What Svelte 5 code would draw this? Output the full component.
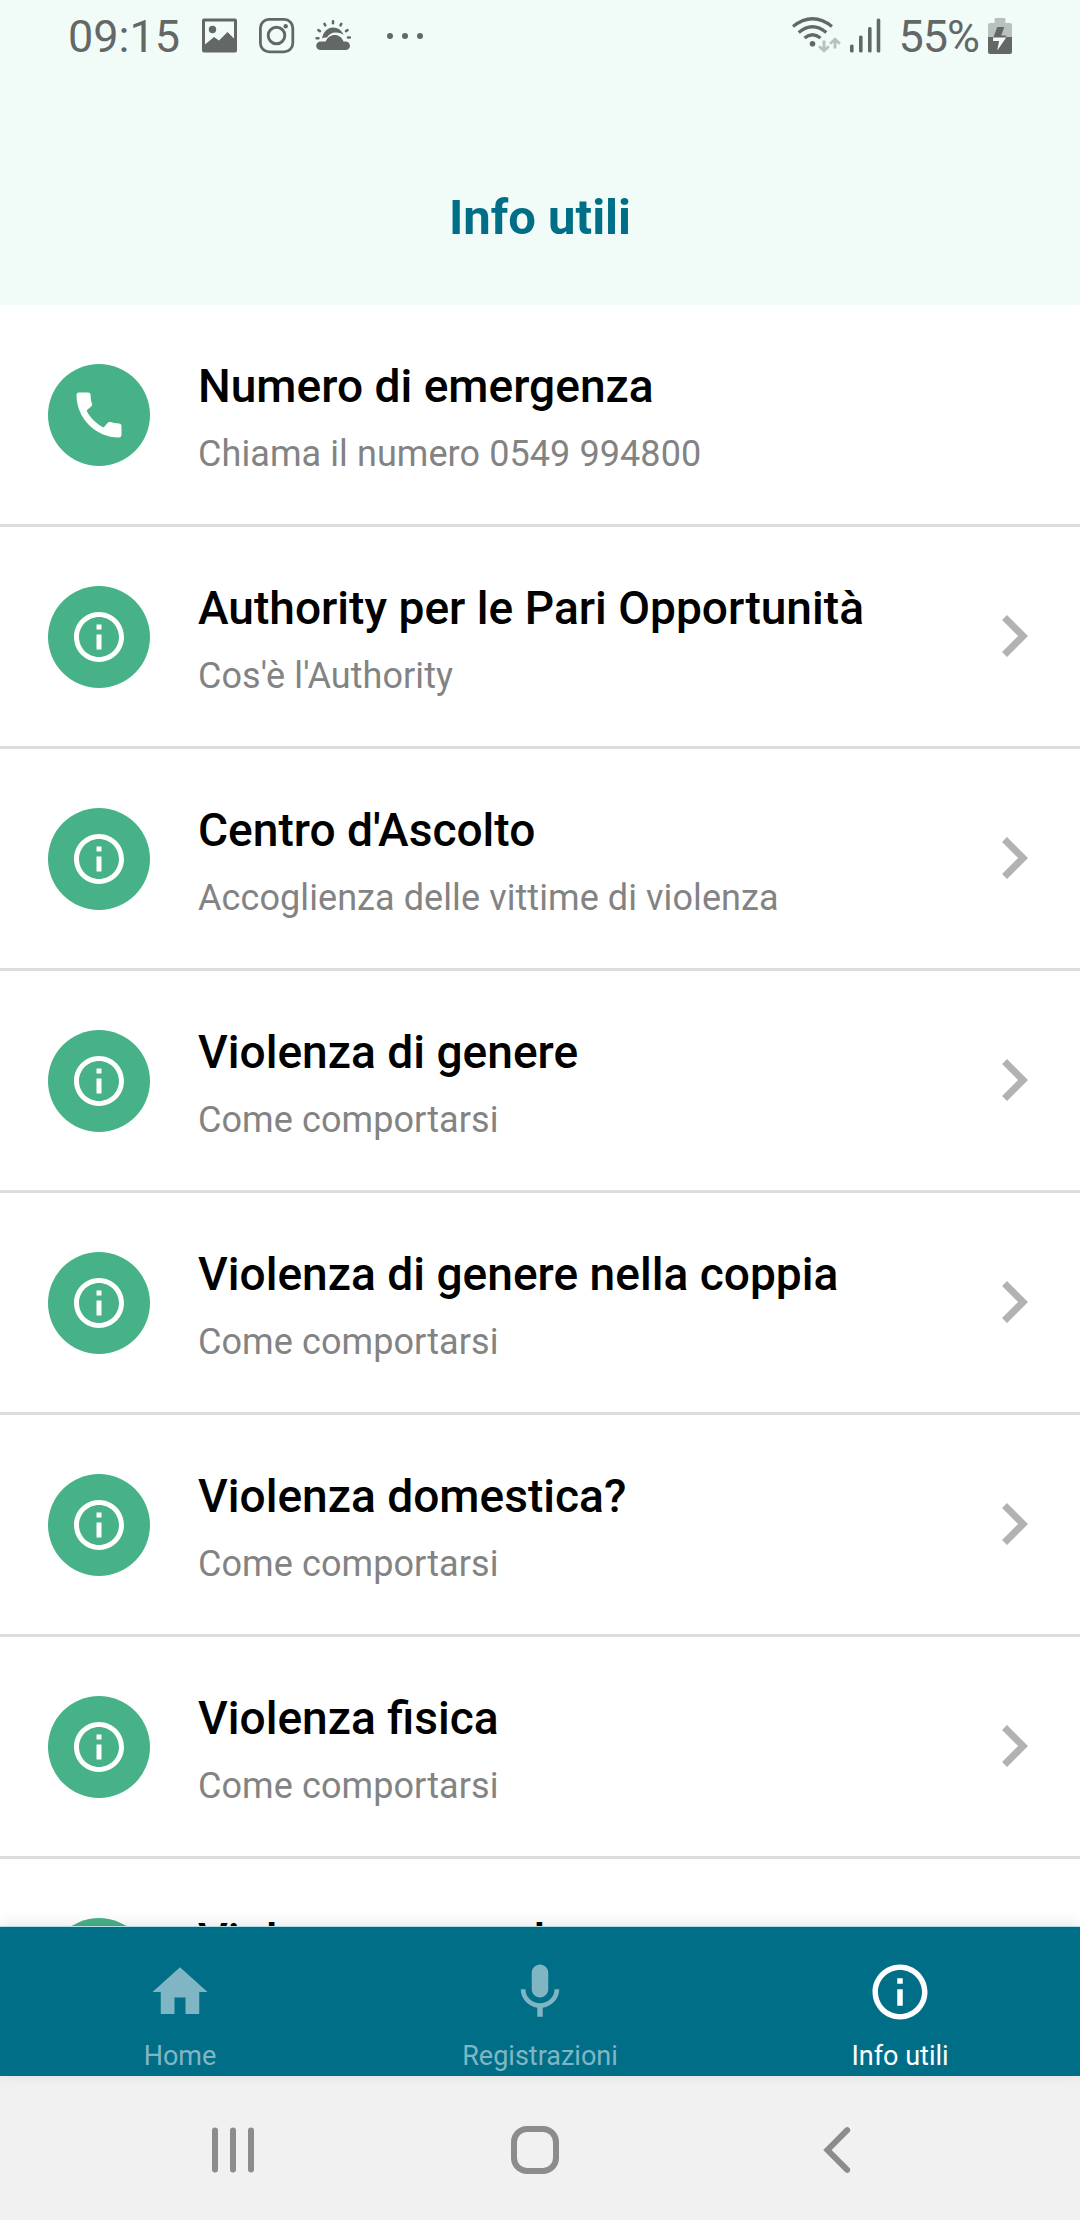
<script>
    const items = [
        { title: 'Numero di emergenza', subtitle: 'Chiama il numero 0549 994800', phone: true },
        { title: 'Authority per le Pari Opportunità', subtitle: "Cos'è l'Authority" },
        { title: "Centro d'Ascolto", subtitle: 'Accoglienza delle vittime di violenza' },
        { title: 'Violenza di genere', subtitle: 'Come comportarsi' },
        { title: 'Violenza di genere nella coppia', subtitle: 'Come comportarsi' },
        { title: 'Violenza domestica?', subtitle: 'Come comportarsi' },
        { title: 'Violenza fisica', subtitle: 'Come comportarsi' },
        { title: 'Violenza sessuale', subtitle: 'Come comportarsi' }
    ];

    const icons = {
        phone: 'M20.01 15.38c-1.23 0-2.42-.2-3.53-.56a.977.977 0 0 0-1.01.24l-1.57 1.97c-2.83-1.35-5.48-3.9-6.89-6.83l1.95-1.66c.27-.28.35-.67.24-1.02-.37-1.11-.56-2.3-.56-3.53 0-.54-.45-.99-.99-.99H4.19C3.65 3 3 3.24 3 3.99 3 13.28 10.73 21 20.01 21c.71 0 .99-.63.99-1.18v-3.45c0-.54-.45-.99-.99-.99z',
        info: 'M11 17h2v-6h-2v6zm1-15C6.48 2 2 6.48 2 12s4.48 10 10 10 10-4.48 10-10S17.52 2 12 2zm0 18c-4.41 0-8-3.59-8-8s3.59-8 8-8 8 3.59 8 8-3.59 8-8 8zM11 9h2V7h-2v2z',
        home: 'M10 20v-6h4v6h5v-8h3L12 3 2 12h3v8z',
        mic: 'M12 14c1.66 0 2.99-1.34 2.99-3L15 5c0-1.66-1.34-3-3-3S9 3.34 9 5v6c0 1.66 1.34 3 3 3zm5.3-3c0 3-2.54 5.1-5.3 5.1S6.7 14 6.7 11H5c0 3.41 2.72 6.23 6 6.72V21h2v-3.28c3.28-.48 6-3.3 6-6.72h-1.7z',
        chevron: 'M10 6L8.59 7.41 13.17 12l-4.58 4.59L10 18l6-6z'
    };

    const tabs = [
        { label: 'Home', icon: icons.home },
        { label: 'Registrazioni', icon: icons.mic },
        { label: 'Info utili', icon: icons.info }
    ];

    let active = $state(2);
</script>

<div class="app">
    <header>
        <div class="status">
            <span class="clock">09:15</span>
            <svg class="picture" width="36" height="36" viewBox="0 0 36 36">
                <path fill-rule="evenodd" d="M2 .5h31a2 2 0 0 1 2 2v30a2 2 0 0 1-2 2H2a2 2 0 0 1-2-2v-30a2 2 0 0 1 2-2zM3 3.500v23l9-7.500 5 3.500 8.500-8.500 6.500 6.500v-17z" />
                <circle cx="10.500" cy="11.500" r="3.700" />
            </svg>
            <svg class="insta" width="36" height="36" viewBox="0 0 36 36">
                <rect x="1.400" y="1.400" width="32.400" height="32.400" rx="8.500" fill="none" stroke="currentColor" stroke-width="2.800" />
                <circle cx="17.500" cy="17.500" r="8.300" fill="none" stroke="currentColor" stroke-width="2.900" />
                <circle cx="26.700" cy="8.200" r="2.200" />
            </svg>
            <svg class="weather" width="37" height="32" viewBox="0 0 37 32">
                <g stroke="currentColor" stroke-width="2.600" stroke-linecap="round">
                    <path d="M1.600 18.200h1.800M3.400 10.200l1.500.9M9.500 3.800l.8 1.500M18 1.400v1.800M26.300 3.800l-.8 1.500M32.500 10.200l-1.500.9M33 17.500h1.800" />
                </g>
                <path d="M7 18.500C8.500 11.500 12.500 7.500 18 7.500c5 0 9 3 10.800 7.500C27 13.500 24 12.500 21 12.500c-4.500 0-7.500 2-9 5-1.500-.3-3.300 0-5 1z" />
                <path d="M5.500 30a4.300 4.300 0 0 1 0-8.600h5.200c1.800-4 5-6.400 9-6.400s7.200 2.400 8.800 6.400h2.200a4.300 4.300 0 0 1 0 8.600z" />
            </svg>
            <svg class="dots" width="36" height="6" viewBox="0 0 36 6">
                <circle cx="3" cy="3" r="3" /><circle cx="18" cy="3" r="3" /><circle cx="33" cy="3" r="3" />
            </svg>
            <svg class="wifi" width="49" height="37" viewBox="0 0 49 37">
                <g fill="none" stroke="currentColor" stroke-width="3.200">
                    <path d="M1 9.500Q20.500-6 40 9.500M6.700 15.500Q20.500 4 34.300 15.500M12.500 21Q20.500 14.500 28.500 21" />
                </g>
                <circle cx="20.500" cy="26.800" r="2.800" />
                <path class="faint" d="M30.500 23.500h3v7l2.600-2.300 1.700 2-5.800 5.600-5.800-5.600 1.700-2 2.600 2.300zM41.500 31.500h3v-6l2.600 2.300 1.700-2-5.800-5.600-5.800 5.600 1.700 2 2.600-2.300z" />
            </svg>
            <svg class="signal" width="31" height="35" viewBox="0 0 31 35">
                <rect x="0" y="26.500" width="3.600" height="8" rx="1.500" />
                <rect x="9" y="17.500" width="3.600" height="17" rx="1.500" />
                <rect x="18" y="9" width="3.600" height="25.500" rx="1.500" />
                <rect x="26.700" y="0.500" width="3.600" height="34" rx="1.500" />
            </svg>
            <span class="percent">55%</span>
            <svg class="battery" width="24" height="36" viewBox="0 0 24 36">
                <path class="faint" d="M7.500 0h9a1 1 0 0 1 1 1v4H22a2 2 0 0 1 2 2v12H0V7a2 2 0 0 1 2-2h4.500V1a1 1 0 0 1 1-1z" />
                <path d="M0 19h24v15a2 2 0 0 1-2 2H2a2 2 0 0 1-2-2z" />
                <path d="M9.300 9h7l-3.100 8.500h5.300L17.500 19H5.500z" />
                <path class="bolt" d="M5.200 19.500h13L9.300 32.500l1.800-9.500H5z" />
            </svg>
        </div>
        <h1>Info utili</h1>
    </header>

    <main>
        {#each items as item}
            <div class="row">
                <div class="badge">
                    <svg width="60" height="60" viewBox="0 0 24 24"><path d={item.phone ? icons.phone : icons.info} /></svg>
                </div>
                <div class="text">
                    <h2>{item.title}</h2>
                    <p>{item.subtitle}</p>
                </div>
                {#if !item.phone}
                    <svg class="chevron" width="84" height="84" viewBox="0 0 24 24"><path d={icons.chevron} /></svg>
                {/if}
            </div>
        {/each}
    </main>

    <nav class="tabs">
        {#each tabs as tab, i}
            <button class:active={active === i} onclick={() => (active = i)}>
                <svg width="66" height="66" viewBox="0 0 24 24"><path d={tab.icon} /></svg>
                <span>{tab.label}</span>
            </button>
        {/each}
    </nav>

    <footer>
        <svg width="48" height="48" viewBox="0 0 48 48">
            <path d="M6 4.500v39M24 4.500v39M42 4.500v39" />
        </svg>
        <svg width="48" height="48" viewBox="0 0 48 48">
            <rect x="3" y="3" width="42" height="42" rx="13" />
        </svg>
        <svg width="48" height="48" viewBox="0 0 48 48">
            <path d="M34.200 4.200L14.500 24l19.700 19.800" />
        </svg>
    </footer>
</div>

<style>
    :global(body) {
        margin: 0;
        background: #fff;
    }

    .app {
        display: flex;
        flex-direction: column;
        width: 1080px;
        height: 2220px;
        overflow: hidden;
        font-family: Roboto, sans-serif;
        background: #fff;
    }

    svg {
        display: block;
        flex: none;
        fill: currentColor;
    }

    h1,
    h2,
    p {
        margin: 0;
        white-space: nowrap;
    }

    header {
        flex: none;
        height: 305px;
        background: #f1fcf9;
    }

    .status {
        display: flex;
        align-items: center;
        box-sizing: border-box;
        height: 71px;
        padding: 0 68px;
        color: #636866;
        font-size: 45px;
    }

    .clock {
        width: 134px;
        line-height: 71px;
        margin-top: 2px;
    }

    .insta {
        margin-left: 21px;
    }

    .weather {
        margin-left: 20px;
    }

    .dots {
        margin-left: 35px;
    }

    .wifi {
        margin-left: auto;
    }

    .signal {
        margin-left: 9px;
    }

    .percent {
        margin: 2px 9px 0 17px;
        line-height: 71px;
        letter-spacing: -1px;
    }

    .faint {
        fill: #b9c1be;
    }

    .bolt {
        fill: #f1fcf9;
    }

    h1 {
        padding-top: 117px;
        text-align: center;
        font-size: 49px;
        font-weight: 700;
        line-height: 60px;
        color: #006e87;
    }

    main {
        flex: 1;
        min-height: 0;
        overflow: hidden;
    }

    .row {
        display: flex;
        align-items: center;
        box-sizing: border-box;
        height: 222px;
        padding: 0 24px 0 48px;
        border-bottom: 3px solid #ddd;
    }

    .badge {
        display: flex;
        align-items: center;
        justify-content: center;
        flex: none;
        width: 102px;
        height: 102px;
        border-radius: 50%;
        background: #47b287;
        color: #fff;
    }

    .text {
        flex: 1;
        margin: 3px 0 0 48px;
    }

    h2 {
        font-size: 46.1px;
        font-weight: 500;
        line-height: 60px;
        color: #000;
    }

    p {
        margin-top: 16px;
        font-size: 36px;
        line-height: 44px;
        letter-spacing: 0.08px;
        color: #838383;
    }

    .chevron {
        margin-bottom: 1px;
        color: #b2b2b2;
    }

    .tabs {
        position: relative;
        display: flex;
        flex: none;
        height: 149px;
        border-top: 1px solid #b3dde7;
        background: #006e87;
        box-shadow: 0 -2px 14px rgba(0, 0, 0, 0.1);
    }

    button {
        display: flex;
        flex: 1;
        flex-direction: column;
        align-items: center;
        padding: 32px 0 0;
        border: 0;
        background: none;
        font: inherit;
        font-size: 27px;
        line-height: 32px;
        color: #80b6c3;
    }

    button span {
        margin-top: 15px;
    }

    .active {
        color: #fff;
    }

    footer {
        display: flex;
        align-items: center;
        justify-content: space-between;
        flex: none;
        box-sizing: border-box;
        height: 144px;
        padding: 4px 219px 0 209px;
        background: #f1f1f1;
    }

    footer svg {
        fill: none;
        stroke: #8c8c8c;
        stroke-width: 6;
        stroke-linecap: round;
    }
</style>
